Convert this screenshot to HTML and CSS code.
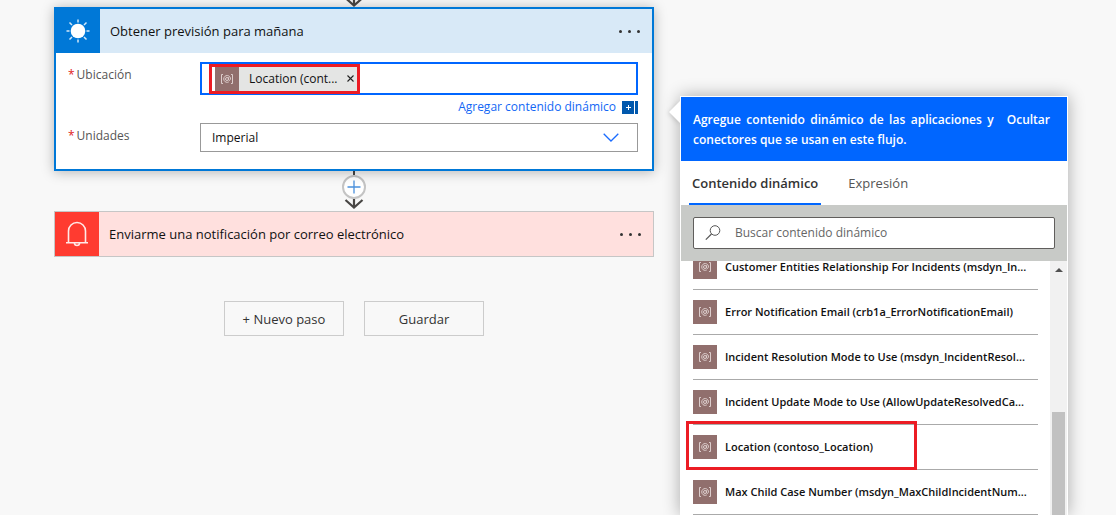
FILE: index.html
```html
<!DOCTYPE html>
<html lang="es">
<head>
<meta charset="utf-8">
<title>Editor de flujo</title>
<link rel="stylesheet" href="styles.css">
</head>
<body>
<svg class="defs" aria-hidden="true">
  <symbol id="param" viewBox="0 0 24 24">
    <g fill="none" stroke="#dccdcc" stroke-width="1">
      <path d="M8 7.500H6.500v9H8M16 7.500h1.500v9H16"/>
      <circle cx="12" cy="12" r="1.500"/>
      <path d="M13.500 10.300v2.400q.3 1 1.200.6 1-.8.7-2.300A3.400 3.400 0 1 0 13.800 14.900"/>
    </g>
  </symbol>
  <symbol id="arrow" viewBox="0 0 20 10">
    <path d="M10 0v8M1.500 1l8.500 7.500L18.500 1" fill="none" stroke="#484644" stroke-width="2.200"/>
  </symbol>
</svg>
<div class="designer">
  <main class="flow">
    <div class="link-in"><svg class="arrow"><use href="#arrow"/></svg></div>
    <section class="card selected">
      <header class="card-head weather">
        <span class="card-icon">
          <svg width="44" height="44" viewBox="0 0 44 44"><circle cx="22" cy="22" r="7.300" fill="#fff"/><path d="M22 10.500v3M22 30.500v3M10.500 22h3M30.500 22h3M13.500 13.500l2.500 2.500M28 28l2.500 2.500M13.500 30.500l2.500-2.500M28 16l2.500-2.500" stroke="#d5e8f8" stroke-width="1.500"/></svg>
        </span>
        <h2 class="card-title">Obtener previsión para mañana</h2>
        <button class="more" aria-label="Más opciones"><i></i><i></i><i></i></button>
      </header>
      <div class="fields">
        <label class="label" for="place"><span class="req">*</span>Ubicación</label>
        <div class="token-box">
          <span class="token">
            <svg class="chip"><use href="#param"/></svg>
            <span class="token-text">Location (cont...</span>
            <button class="remove" aria-label="Quitar"><svg width="7" height="7" viewBox="0 0 7 7"><path d="M.5.5l6 6M6.500.5l-6 6" stroke="#222" stroke-width="1.100"/></svg></button>
          </span>
          <input class="token-input" id="place" type="text">
        </div>
        <div class="add-row">
          <a class="add-link" href="#panel">Agregar contenido dinámico</a>
          <svg width="16" height="13" viewBox="0 0 16 13"><path d="M0 0h12v13H0zM13 0h3v13h-3z" fill="#0058ad"/><path d="M4 6.500h5M6.500 4v5" stroke="#fff"/></svg>
        </div>
        <label class="label" for="units"><span class="req">*</span>Unidades</label>
        <div class="select-box">
          <select class="select" id="units"><option>Imperial</option></select>
          <svg class="chevron" width="16" height="9" viewBox="0 0 16 9"><path d="M.7.700l7.300 7.300 7.300-7.300" fill="none" stroke="#1a6cff" stroke-width="1.300"/></svg>
        </div>
      </div>
    </section>
    <div class="connector">
      <span class="stem"></span>
      <button class="insert" aria-label="Insertar paso"><svg width="14" height="14" viewBox="0 0 14 14"><path d="M7 .5v13M.5 7h13" stroke="#4a90dc" stroke-width="1.300"/></svg></button>
      <svg class="arrow"><use href="#arrow"/></svg>
    </div>
    <section class="card">
      <header class="card-head notify">
        <span class="card-icon">
          <svg width="44" height="44" viewBox="0 0 44 44"><path d="M13.500 30.500V19a8.500 8.500 0 0 1 17 0v11.500M11 30.700h22M19.300 31.500a2.800 2.800 0 0 0 5.400 0" fill="none" stroke="#ffe9e7" stroke-width="1.600"/></svg>
        </span>
        <h2 class="card-title">Enviarme una notificación por correo electrónico</h2>
        <button class="more" aria-label="Más opciones"><i></i><i></i><i></i></button>
      </header>
    </section>
    <div class="actions">
      <button class="action">+ Nuevo paso</button>
      <button class="action">Guardar</button>
    </div>
  </main>
  <aside class="panel" id="panel">
    <header class="panel-head">
      <p class="panel-text">Agregue contenido dinámico de las aplicaciones y conectores que se usan en este flujo.</p>
      <button class="hide">Ocultar</button>
    </header>
    <nav class="tabs">
      <button class="tab current">Contenido dinámico</button>
      <button class="tab">Expresión</button>
    </nav>
    <div class="search-bar">
      <label class="search">
        <svg width="16" height="16" viewBox="0 0 16 16"><circle cx="10" cy="5.500" r="4.800" fill="none" stroke="#555"/><path d="M6.500 9L.8 14.700" stroke="#555" stroke-width="1.200"/></svg>
        <input class="search-input" type="text" placeholder="Buscar contenido dinámico" aria-label="Buscar contenido dinámico">
      </label>
    </div>
    <div class="scroller">
      <ul class="items">
        <li class="item"><svg class="chip"><use href="#param"/></svg><span>Customer Entities Relationship For Incidents (msdyn_In...</span></li>
        <li class="item"><svg class="chip"><use href="#param"/></svg><span>Error Notification Email (crb1a_ErrorNotificationEmail)</span></li>
        <li class="item"><svg class="chip"><use href="#param"/></svg><span>Incident Resolution Mode to Use (msdyn_IncidentResol...</span></li>
        <li class="item"><svg class="chip"><use href="#param"/></svg><span>Incident Update Mode to Use (AllowUpdateResolvedCa...</span></li>
        <li class="item marked"><svg class="chip"><use href="#param"/></svg><span>Location (contoso_Location)</span></li>
        <li class="item"><svg class="chip"><use href="#param"/></svg><span>Max Child Case Number (msdyn_MaxChildIncidentNum...</span></li>
      </ul>
      <div class="track">
        <svg width="8" height="4" viewBox="0 0 8 4"><path d="M0 4l4-4 4 4z" fill="#505050"/></svg>
        <span class="thumb"></span>
      </div>
    </div>
  </aside>
</div>
</body>
</html>
```
FILE: styles.css
```css
*, *::before, *::after { box-sizing: border-box; }
body {
  margin: 0;
  background: #f8f8f8;
  color: #111;
  font: 13px/20px "Open Sans", "Noto Sans", sans-serif;
}
button, input, select { font: inherit; color: inherit; }
button { padding: 0; border: 0; background: none; }
.defs { position: absolute; width: 0; height: 0; }
.designer {
  display: flex;
  gap: 26px;
  height: 100vh;
  padding: 0 48px 0 54px;
  overflow: hidden;
}
.flow { flex: 1 1 600px; min-width: 0; }
.link-in {
  display: flex;
  flex-direction: column;
  align-items: center;
  justify-content: flex-end;
  height: 7px;
}
.arrow { flex: none; width: 20px; height: 10px; }
.card { border: 1px solid #c6c6c6; }
.selected {
  position: relative;
  border: 2px solid #0078d7;
  background: #fff;
  box-shadow: 0 1px 12px rgba(0, 0, 0, .28);
}
.card-head { display: flex; align-items: center; height: 44px; }
.weather { background: #d8e9f7; }
.notify { background: #ffe0de; }
.card-icon { width: 44px; height: 44px; }
.weather .card-icon { background: #0078d7; }
.notify .card-icon { background: #ff3b30; }
.card-title { flex: 1; margin: 0; padding-left: 10px; font-size: 13px; font-weight: 400; }
.more { display: flex; gap: 6px; margin-right: 12px; }
.more i { width: 3px; height: 3px; border-radius: 50%; background: #333; }
.fields {
  display: grid;
  grid-template-columns: 132px 1fr;
  padding: 9px 14px 17px 12px;
}
.label { padding-top: 3px; color: #555; font-size: 12px; }
.req { margin-right: 2px; color: #e02020; }
.token-box {
  display: flex;
  align-items: center;
  height: 33px;
  padding: 0 7px;
  border: 2px solid #0066ff;
}
.token {
  display: flex;
  align-items: center;
  height: 30px;
  padding-left: 3px;
  border: 3px solid #ec1c24;
  background: #e4e5e4;
  box-shadow: inset 3px 0 #fff;
}
.chip { flex: none; width: 24px; height: 24px; background: #916f6d; }
.token-text { margin-left: 10px; font-size: 12px; white-space: nowrap; }
.remove { display: flex; margin: 0 3px 0 9px; }
.token-input { flex: 1; min-width: 0; border: 0; outline: 0; background: none; }
.add-row {
  grid-column: 2;
  display: flex;
  align-items: center;
  justify-content: flex-end;
  gap: 6px;
  height: 28px;
  padding-bottom: 4px;
}
.add-link { color: #1267f5; font-size: 12px; text-decoration: none; }
.select-box { display: grid; align-items: center; }
.select-box > * { grid-area: 1 / 1; }
.select {
  width: 100%;
  height: 29px;
  padding: 0 11px;
  border: 1px solid #999;
  border-radius: 0;
  background: #fff;
  appearance: none;
  font-size: 12px;
}
.chevron { justify-self: end; margin-right: 19px; pointer-events: none; }
.connector { display: flex; flex-direction: column; align-items: center; height: 40px; }
.stem { width: 2px; height: 4px; background: #484644; }
.insert {
  display: grid;
  place-items: center;
  width: 24px;
  height: 24px;
  border: 2px solid #c4c4c4;
  border-radius: 50%;
  background: #fff;
}
.actions { display: flex; justify-content: center; gap: 20px; margin-top: 44px; }
.action { width: 120px; height: 35px; border: 1px solid #ccc; color: #333; }
.panel {
  position: relative;
  flex: 1 1 388px;
  display: flex;
  flex-direction: column;
  min-width: 0;
  margin-top: 96px;
  padding: 1px 1px 0;
  background: #fff;
  box-shadow: 0 0 16px rgba(0, 0, 0, .32);
}
.panel::before {
  content: "";
  position: absolute;
  top: 5px;
  left: -11px;
  border: solid transparent;
  border-width: 11px 11px 11px 0;
  border-right-color: #fff;
  filter: drop-shadow(-1px 1px 2px rgba(0, 0, 0, .15));
}
.panel-head {
  display: flex;
  align-items: flex-start;
  gap: 13px;
  padding: 13px 17px 11px 12px;
  background: #0066ff;
  color: #fff;
}
.panel-text { flex: 1; margin: 0; font-size: 12px; font-weight: 600; text-align: justify; }
.hide { font-size: 12px; font-weight: 600; }
.tabs { display: flex; gap: 24px; height: 44px; padding-left: 8px; }
.tab { padding: 2px 3px 0; border-bottom: 2px solid transparent; color: #555; }
.current { border-color: #0066ff; color: #333; font-weight: 600; }
.search-bar { padding: 12px; background: #c8cac7; }
.search {
  display: flex;
  align-items: center;
  gap: 14px;
  height: 32px;
  padding: 0 11px;
  border: 1px solid #605e5c;
  border-radius: 2px;
  background: #fff;
}
.search-input { flex: 1; min-width: 0; padding: 0; border: 0; outline: 0; font-size: 12px; }
.search-input::placeholder { color: #666; }
.scroller { flex: 1; display: flex; min-height: 0; overflow: hidden; }
.items { flex: 1; min-width: 0; margin: -16px 12px 0; padding: 0; list-style: none; }
.item {
  display: flex;
  align-items: center;
  gap: 8px;
  height: 45px;
  border-bottom: 1px solid #aaa;
  font-size: 11px;
  font-weight: 600;
  white-space: nowrap;
}
.marked { position: relative; }
.marked::after {
  content: "";
  position: absolute;
  top: -4px;
  left: -7px;
  width: 231px;
  height: 49px;
  border: 3px solid #ec1c24;
}
.track {
  display: flex;
  flex-direction: column;
  align-items: center;
  width: 17px;
  padding-top: 7px;
  background: #f1f1f1;
}
.thumb { flex: 1; width: 13px; margin-top: 140px; background: #c1c1c1; }
```
